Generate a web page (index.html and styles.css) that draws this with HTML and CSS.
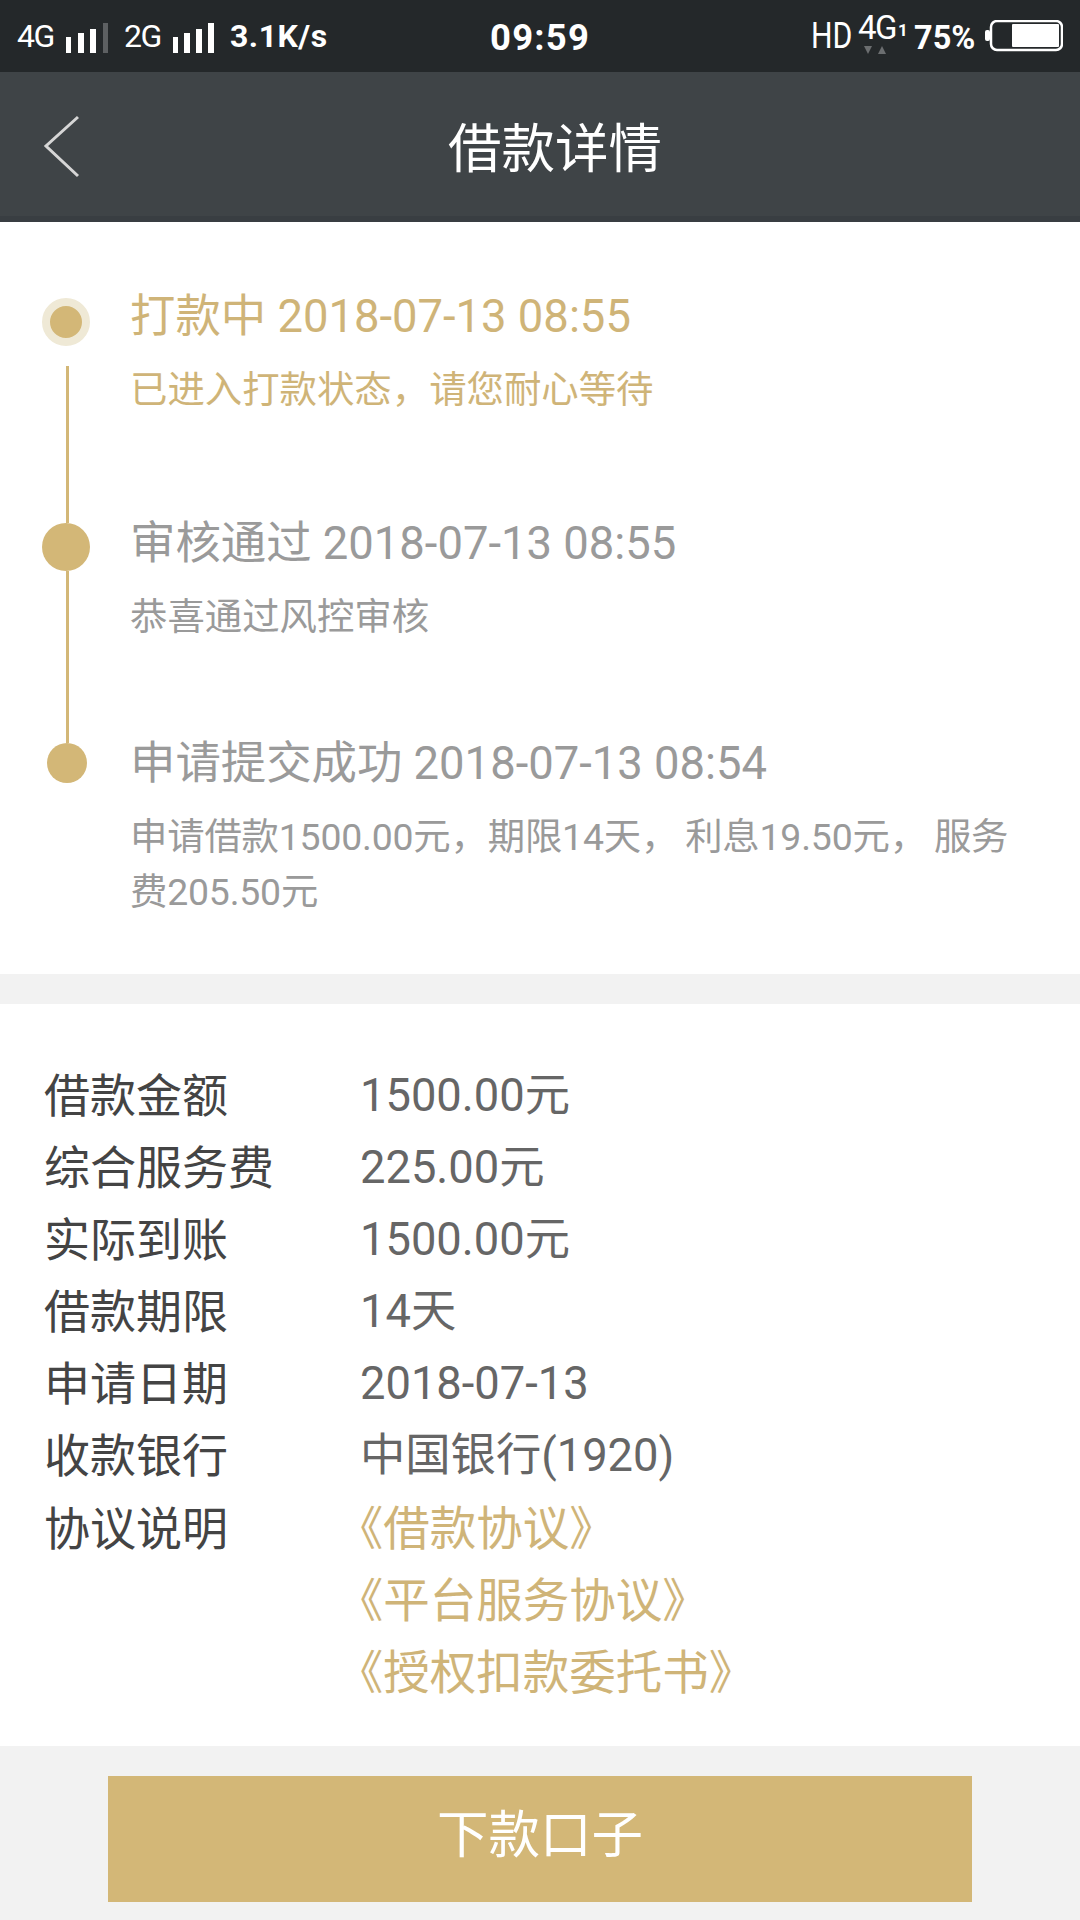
FILE: index.html
```html
<!DOCTYPE html>
<html lang="zh-CN">
<head>
<meta charset="utf-8">
<title>借款详情</title>
<link rel="stylesheet" href="styles.css">
</head>
<body>
<div class="page">
  <header class="statusbar">
    <div class="sb-left">
      <span class="net">4G</span>
      <svg class="bars" width="44" height="32" viewBox="0 0 44 32"><rect x="1" y="14" width="5" height="16" fill="#fff"/><rect x="13" y="10" width="6" height="20" fill="#fff"/><rect x="25" y="6" width="6" height="24" fill="#fff"/><rect x="38" y="0" width="5" height="30" fill="#5d6062"/></svg>
      <span class="net net-two">2G</span>
      <svg class="bars" width="44" height="32" viewBox="0 0 44 32"><rect x="1" y="14" width="5" height="16" fill="#fff"/><rect x="12" y="10" width="6" height="20" fill="#fff"/><rect x="24" y="6" width="6" height="24" fill="#fff"/><rect x="36" y="0" width="6" height="30" fill="#fff"/></svg>
      <span class="speed">3.1K/s</span>
    </div>
    <div class="clock">09:59</div>
    <div class="sb-right">
      <span class="hd">HD</span>
      <span class="lte">
        <span class="lte-text">4G</span>
        <svg class="lte-arrows" width="26" height="8" viewBox="0 0 26 8"><path d="M0 0h8L4 8z" fill="#6b6e70"/><path d="M14 8h8l-4-8z" fill="#6b6e70"/></svg>
      </span>
      <span class="sim">1</span>
      <span class="pct">75%</span>
      <svg class="battery" width="78" height="32" viewBox="0 0 78 32"><rect x="0" y="10" width="5" height="11" rx="2" fill="#fff"/><rect x="6" y="1" width="71" height="29" rx="6" fill="none" stroke="#fff" stroke-width="2.5"/><rect x="27" y="4" width="47" height="23" rx="1" fill="#fff"/></svg>
    </div>
  </header>

  <nav class="navbar">
    <svg class="back" width="40" height="66" viewBox="0 0 40 66"><path d="M36 3 L4 32 L36 62" fill="none" stroke="#d6d6d6" stroke-width="3"/></svg>
    <h1 class="nav-title">借款详情</h1>
  </nav>

  <section class="timeline">
    <div class="step step-first">
      <div class="rail rail-first">
        <span class="dot dot-ring"></span>
        <span class="line line-first"></span>
      </div>
      <div class="step-body active">
        <div class="step-title">打款中 2018-07-13 08:55</div>
        <div class="step-sub">已进入打款状态，请您耐心等待</div>
      </div>
    </div>
    <div class="step step-second">
      <div class="rail rail-second">
        <span class="dot dot-big"></span>
        <span class="line"></span>
      </div>
      <div class="step-body">
        <div class="step-title">审核通过 2018-07-13 08:55</div>
        <div class="step-sub">恭喜通过风控审核</div>
      </div>
    </div>
    <div class="step">
      <div class="rail rail-third">
        <span class="dot dot-small"></span>
      </div>
      <div class="step-body">
        <div class="step-title">申请提交成功 2018-07-13 08:54</div>
        <div class="step-sub step-sub-tight">申请借款1500.00元，期限14天， 利息19.50元， 服务费205.50元</div>
      </div>
    </div>
  </section>

  <section class="details">
    <div class="label">借款金额</div><div class="value">1500.00元</div>
    <div class="label">综合服务费</div><div class="value">225.00元</div>
    <div class="label">实际到账</div><div class="value">1500.00元</div>
    <div class="label">借款期限</div><div class="value">14天</div>
    <div class="label">申请日期</div><div class="value">2018-07-13</div>
    <div class="label">收款银行</div><div class="value">中国银行(1920)</div>
    <div class="label">协议说明</div>
    <div class="links">
      <div class="link"><span class="br">《</span>借款协议<span class="br">》</span></div>
      <div class="link"><span class="br">《</span>平台服务协议<span class="br">》</span></div>
      <div class="link"><span class="br">《</span>授权扣款委托书<span class="br">》</span></div>
    </div>
  </section>

  <footer class="bottom">
    <button class="cta" type="button">下款口子</button>
  </footer>
</div>
</body>
</html>
```
FILE: styles.css
```css
* { box-sizing: border-box; }
html, body { margin: 0; padding: 0; }
body {
  width: 1080px;
  height: 1920px;
  overflow: hidden;
  background: #f2f2f2;
  font-family: Roboto, "Noto Sans CJK SC", sans-serif;
}
.page { display: flex; flex-direction: column; height: 1920px; }

/* status bar */
.statusbar {
  height: 72px;
  background: #24282a;
  color: #fff;
  display: flex;
  align-items: center;
  position: relative;
  padding: 0 18px 0 17px;
}
.sb-left { display: flex; align-items: center; }
.net { font-size: 32px; letter-spacing: -1.5px; line-height: 36px; width: 48px; }
.net-two { margin-left: 15px; }
.bars { margin-left: 0; margin-top: 6px; }
.speed { font-size: 32px; font-weight: 700; margin-left: 14px; letter-spacing: .5px; line-height: 36px; }
.clock {
  position: absolute;
  left: 490px;
  top: 18px;
  font-size: 36.5px;
  line-height: 40px;
  font-weight: 700;
  letter-spacing: 1.2px;
}
.sb-right { margin-left: auto; display: flex; align-items: center; }
.hd { display: inline-block; font-size: 36px; line-height: 40px; width: 46px; transform: scaleX(.84); transform-origin: left center; }
.lte { display: flex; flex-direction: column; align-items: center; width: 40px; }
.lte-text { font-size: 33px; letter-spacing: -1.5px; line-height: 30px; margin-top: -6px; }
.lte-arrows { margin-top: 3px; }
.sim { font-size: 17px; font-weight: 700; line-height: 20px; margin: -12px 0 0 1px; width: 16px; }
.pct { font-size: 32.5px; font-weight: 700; line-height: 36px; margin-top: 4px; width: 71px; }
.battery { margin-right: -1px; }

/* nav */
.navbar {
  height: 150px;
  background: #3f4447;
  border-bottom: 6px solid #393e42;
  display: flex;
  align-items: center;
  position: relative;
  padding-left: 42px;
  padding-top: 6px;
}
.back { flex: none; }
.nav-title {
  position: absolute;
  left: 0;
  right: 0;
  top: 45px;
  margin: 0;
  padding-left: 30px;
  text-align: center;
  color: #fff;
  font-size: 53.5px;
  font-weight: 400;
  line-height: 66px;
}

/* timeline */
.timeline { background: #fff; padding: 65px 0 54px; }
.step { display: grid; grid-template-columns: 130px 1fr; }
.step-first { min-height: 227px; }
.step-second { min-height: 220px; }
.rail { display: flex; flex-direction: column; align-items: flex-start; }
.rail-first { margin-top: 11px; margin-bottom: -9px; }
.rail-second { margin-top: 9px; margin-bottom: -9px; }
.rail-third { margin-top: 9px; }
.dot { display: block; border-radius: 50%; background: #d3b777; flex: none; }
.dot-ring { width: 48px; height: 48px; margin-left: 42px; border: 8px solid #efe9d6; }
.dot-big { width: 48px; height: 48px; margin-left: 42px; }
.dot-small { width: 40px; height: 40px; margin-left: 47px; }
.line { display: block; width: 3px; flex: 1; margin-left: 66px; background: #d3b777; }
.line-first { margin-top: 20px; }
.step-body { color: #9a9a9a; padding-right: 66px; }
.step-body.active { color: #cfb478; }
.step-title { font-size: 45.4px; line-height: 60px; }
.step-sub { font-size: 37.4px; line-height: 55px; margin-top: 16px; }
.step-sub-tight { word-spacing: -2px; letter-spacing: -.2px; }

/* details */
.details {
  margin-top: 30px;
  background: #fff;
  padding: 55.5px 0 36.7px 44px;
  display: grid;
  grid-template-columns: 316px 1fr;
  grid-auto-rows: 72.2px;
  font-size: 46px;
  line-height: 72.2px;
}
.label { color: #444; }
.value { color: #666; font-size: 45.3px; }
.links { grid-row: span 3; color: #cfb478; font-size: 46.5px; }
.br { font-feature-settings: "halt"; }

/* bottom */
.bottom { display: flex; justify-content: center; padding-top: 30px; }
.cta {
  width: 864px;
  height: 126px;
  border: 0;
  padding: 0 0 16px;
  background: #d3b777;
  color: #fff;
  font-family: inherit;
  font-size: 51.5px;
}
```
